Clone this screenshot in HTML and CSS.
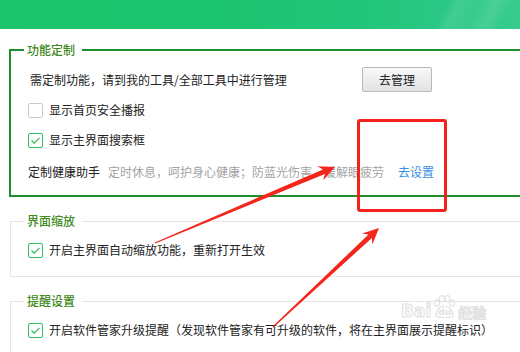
FILE: index.html
```html
<!DOCTYPE html>
<html lang="zh-CN">
<head>
<meta charset="utf-8">
<link rel="stylesheet" href="styles.css">
</head>
<body>
<div class="page">
  <div class="header"></div>
  <div class="content">
    <fieldset class="group group-active">
      <legend class="legend">功能定制</legend>
      <div class="row row-manage">
        <span class="manage-text">需定制功能，请到我的工具/全部工具中进行管理</span>
        <button class="btn">去管理</button>
      </div>
      <label class="row check-row">
        <span class="box"></span>
        <span class="label">显示首页安全播报</span>
      </label>
      <label class="row check-row">
        <span class="box checked"><svg viewBox="0 0 15 15" width="15" height="15"><polyline points="3.5,7.5 6.2,10.2 11.5,4.8" fill="none" stroke="#2bbd5e" stroke-width="1.2"/></svg></span>
        <span class="label">显示主界面搜索框</span>
      </label>
      <div class="row health-row">
        <span class="health-title">定制健康助手</span>
        <span class="health-desc">定时休息，呵护身心健康；防蓝光伤害，缓解眼疲劳</span>
        <a class="link">去设置</a>
      </div>
    </fieldset>

    <fieldset class="group">
      <legend class="legend">界面缩放</legend>
      <label class="row check-row">
        <span class="box checked"><svg viewBox="0 0 15 15" width="15" height="15"><polyline points="3.5,7.5 6.2,10.2 11.5,4.8" fill="none" stroke="#2bbd5e" stroke-width="1.2"/></svg></span>
        <span class="label">开启主界面自动缩放功能，重新打开生效</span>
      </label>
    </fieldset>

    <fieldset class="group group-last">
      <legend class="legend">提醒设置</legend>
      <label class="row check-row">
        <span class="box checked"><svg viewBox="0 0 15 15" width="15" height="15"><polyline points="3.5,7.5 6.2,10.2 11.5,4.8" fill="none" stroke="#2bbd5e" stroke-width="1.2"/></svg></span>
        <span class="label">开启软件管家升级提醒（发现软件管家有可升级的软件，将在主界面展示提醒标识）</span>
      </label>
    </fieldset>
  </div>

  <div class="watermark">
    <span class="wm-bai">Bai</span>
    <span class="wm-paw">
      <svg class="paw" width="24" height="24" viewBox="0 0 24 24">
        <g fill="none" stroke="#e2e2e2" stroke-width="1.2">
          <ellipse cx="5" cy="8" rx="2.6" ry="3.2"/>
          <ellipse cx="10" cy="3.8" rx="2.6" ry="3.2"/>
          <ellipse cx="15.5" cy="3.8" rx="2.6" ry="3.2"/>
          <ellipse cx="20" cy="8" rx="2.6" ry="3.2"/>
          <path d="M4 21 C4 15 8 11 12.5 11 C17 11 21 15 21 21 C21 23 4 23 4 21 Z"/>
        </g>
      </svg>
      <span class="wm-du">du</span>
    </span>
    <span class="wm-jy">经验</span>
  </div>

  <div class="highlight"></div>

  <svg class="arrows" width="520" height="352" viewBox="0 0 520 352">
    <polygon fill="#f4251b" points="335,167 317.3,166.3 322.95,169.4 154.8,242.5 155.2,243.5 324.9,174 323.2,180.2"/>
    <polygon fill="#f4251b" points="379,228 362.2,233.45 368.5,234.4 272.6,326.6 273.4,327.4 371.9,238 372.4,244.4"/>
  </svg>
</div>
</body>
</html>
```

FILE: styles.css
```css
* { box-sizing: border-box; }

html, body {
  margin: 0;
  padding: 0;
  background: #ffffff;
}

body {
  width: 520px;
  height: 352px;
  overflow: hidden;
  font-family: "Noto Sans CJK SC", "Microsoft YaHei", sans-serif;
  font-size: 12px;
  color: #222222;
}

.page {
  position: relative;
  width: 520px;
  height: 352px;
  overflow: hidden;
}

.header {
  height: 29px;
  background:
    linear-gradient(118deg, rgba(255,255,255,0) 0%, rgba(255,255,255,0) 84%, rgba(255,255,255,0.10) 86%, rgba(255,255,255,0.04) 90%, rgba(255,255,255,0.12) 93%, rgba(255,255,255,0.02) 96%),
    linear-gradient(90deg, #1bc46c 0%, #1dc470 45%, #22c57a 70%, #2cc887 88%, #33cb8c 100%);
}

.content {
  padding-top: 14px;
}

.group {
  margin: 17px -60px 0 10px;
  padding: 0 0 11px 0;
  border: 1px solid #e6e6e1;
  min-width: 0;
}

.group-active {
  margin-top: 0;
  margin-left: 9px;
  border: 2px solid #1f8f2e;
  padding-bottom: 8px;
}

.legend {
  margin-left: 13px;
  padding: 0 7px 0 3px;
  font-size: 12px;
  line-height: 14px;
  height: 14px;
  color: #3f8a1c;
  font-weight: 500;
}

.row {
  display: flex;
  align-items: center;
  padding-left: 17px;
  line-height: 16px;
}

.row-manage {
  height: 25px;
  margin-top: 10px;
}

.manage-text {
  margin-left: 2px;
  width: 332px;
  flex: none;
}

.btn {
  width: 70px;
  height: 25px;
  padding: 0;
  border: 1px solid #b9b9b9;
  border-radius: 2px;
  background: linear-gradient(#f8f8f8, #e2e2e2);
  font-family: inherit;
  font-size: 12px;
  color: #222222;
  line-height: 16px;
}

.check-row {
  height: 30px;
}

.row-manage + .check-row {
  margin-top: 3px;
}

.group:not(.group-active) .check-row {
  margin-top: 7px;
}

.box {
  flex: none;
  width: 15px;
  height: 15px;
  border: 1px solid #cacaca;
  border-radius: 2px;
  background: #ffffff;
  position: relative;
}

.box svg {
  position: absolute;
  left: -1px;
  top: -1px;
}

.box.checked {
  border-color: #2bbd5e;
}

.label {
  margin-left: 6px;
}

.health-row {
  height: 30px;
  margin-top: 2px;
}

.health-desc {
  margin-left: 8px;
  color: #a3a3a3;
}

.link {
  margin-left: 14px;
  color: #3a8ee6;
}

.highlight {
  position: absolute;
  left: 357px;
  top: 119px;
  width: 90px;
  height: 93px;
  border: 3px solid #f3231b;
  border-radius: 3px;
}

.arrows {
  position: absolute;
  left: 0;
  top: 0;
}

.watermark {
  position: absolute;
  left: 401px;
  top: 295px;
  height: 24px;
  display: flex;
  align-items: flex-end;
  color: rgba(255,255,255,0);
  -webkit-text-stroke: 1px #e0e0e0;
  font-weight: bold;
}

.wm-bai {
  font-family: "DejaVu Sans", sans-serif;
  font-size: 17px;
  line-height: 15px;
}

.wm-paw {
  position: relative;
  width: 24px;
  height: 24px;
  margin-left: 1px;
}

.paw {
  position: absolute;
  left: 0;
  top: 0;
}

.wm-du {
  position: absolute;
  left: 6px;
  bottom: 2px;
  font-family: "DejaVu Sans", sans-serif;
  font-size: 9px;
  line-height: 9px;
  -webkit-text-stroke: 0;
  color: #e0e0e0;
}

.wm-jy {
  font-family: "Noto Sans CJK SC", sans-serif;
  font-size: 14px;
  line-height: 14px;
  margin-left: 2px;
}
```
